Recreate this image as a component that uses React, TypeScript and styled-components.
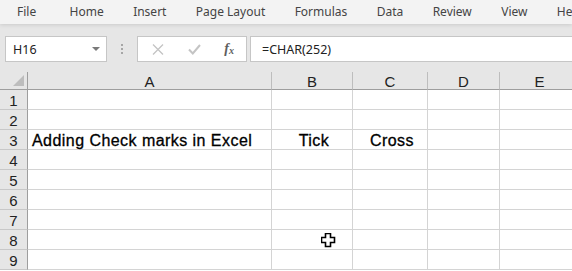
import React from 'react';
import styled, { createGlobalStyle } from 'styled-components';

const GlobalStyle = createGlobalStyle`
  html, body {
    margin: 0;
    padding: 0;
    background: #ffffff;
    overflow: hidden;
  }
`;

const TABS = ['File', 'Home', 'Insert', 'Page Layout', 'Formulas', 'Data', 'Review', 'View', 'Help'];

const COLUMNS = [
  { label: 'A', width: 244 },
  { label: 'B', width: 81 },
  { label: 'C', width: 75 },
  { label: 'D', width: 72 },
  { label: 'E', width: 80 },
];

// row 3 holds the only data
const CELLS: Record<string, { text: string; align: 'left' | 'center' }> = {
  '3A': { text: 'Adding Check marks in Excel', align: 'left' },
  '3B': { text: 'Tick', align: 'center' },
  '3C': { text: 'Cross', align: 'center' },
};

const ROWS = [1, 2, 3, 4, 5, 6, 7, 8, 9];

const App: React.FC = () => {
  return (
    <Window>
      <GlobalStyle />
      <Ribbon>
        {TABS.map((tab) => (
          <Tab key={tab}>{tab}</Tab>
        ))}
      </Ribbon>
      <FormulaBar>
        <NameBox>
          <span>H16</span>
          <DropArrow />
        </NameBox>
        <Grip>
          <i />
          <i />
          <i />
        </Grip>
        <FuncBox>
          <svg width="12" height="11" viewBox="0 0 12 11">
            <path d="M1 0.5 L11 10.5 M11 0.5 L1 10.5" stroke="#c4c4c4" strokeWidth="1.3" fill="none" />
          </svg>
          <svg width="13" height="11" viewBox="0 0 13 11">
            <path d="M1 5.5 L4.8 9.5 L12 1" stroke="#c4c4c4" strokeWidth="2" fill="none" />
          </svg>
          <Fx>
            f<sub>x</sub>
          </Fx>
        </FuncBox>
        <FormulaInput>=CHAR(252)</FormulaInput>
      </FormulaBar>
      <Sheet>
        <Grid>
          <Corner>
            <svg width="11" height="11" viewBox="0 0 11 11">
              <path d="M11 0 L11 11 L0 11 Z" fill="#bdbdbd" />
            </svg>
          </Corner>
          {COLUMNS.map((col) => (
            <ColHeader key={col.label}>{col.label}</ColHeader>
          ))}
          {ROWS.map((row) => (
            <React.Fragment key={row}>
              <RowHeader>{row}</RowHeader>
              {COLUMNS.map((col) => {
                const cell = CELLS[`${row}${col.label}`];
                return (
                  <Cell key={col.label} $align={cell ? cell.align : 'left'}>
                    {cell ? cell.text : ''}
                  </Cell>
                );
              })}
            </React.Fragment>
          ))}
        </Grid>
        <Pointer width="15" height="15" viewBox="0 0 15 15">
          <path
            d="M4.5 0.5 H9.5 V4.5 H13.5 V9.5 H9.5 V13.5 H4.5 V9.5 H0.5 V4.5 H4.5 Z"
            fill="#ffffff"
            stroke="#000000"
            strokeWidth="1.6"
          />
        </Pointer>
      </Sheet>
    </Window>
  );
};

export default App;

const Window = styled.div`
  width: 572px;
  height: 271px;
  overflow: hidden;
  background: #ffffff;
  font-family: 'Liberation Sans', Arial, sans-serif;
`;

const Ribbon = styled.div`
  height: 24px;
  display: flex;
  align-items: center;
  gap: 29.4px;
  padding-left: 17px;
  background: #f3f3f3;
  white-space: nowrap;
  position: relative;
  z-index: 1;
  box-shadow: 0 1px 4px rgba(0, 0, 0, 0.12);
`;

const Tab = styled.span`
  font-family: 'Noto Sans', 'Open Sans', sans-serif;
  font-size: 12px;
  color: #444444;
  line-height: 18px;

  &:first-child {
    margin-right: 4px;
  }
`;

const FormulaBar = styled.div`
  height: 48px;
  box-sizing: border-box;
  padding: 12px 0 0 5px;
  display: flex;
  align-items: flex-start;
  background: #e6e6e6;
`;

const Box = styled.div`
  height: 26px;
  box-sizing: border-box;
  background: #ffffff;
  border: 1px solid #c6c6c6;
  display: flex;
  align-items: center;
  font-family: 'Noto Sans', 'Open Sans', sans-serif;
  font-size: 12.5px;
  color: #222222;
`;

const NameBox = styled(Box)`
  width: 102px;
  padding: 0 6px 0 7px;
  justify-content: space-between;
`;

const DropArrow = styled.span`
  width: 0;
  height: 0;
  border-left: 4px solid transparent;
  border-right: 4px solid transparent;
  border-top: 4px solid #7a7a7a;
`;

const Grip = styled.div`
  width: 30px;
  height: 26px;
  display: flex;
  flex-direction: column;
  align-items: center;
  justify-content: center;
  gap: 2px;

  i {
    display: block;
    width: 2px;
    height: 2px;
    background: #a6a6a6;
  }
`;

const FuncBox = styled(Box)`
  width: 110px;
  padding: 0 12px 0 14px;
  justify-content: space-between;
`;

const Fx = styled.span`
  font-family: 'Liberation Serif', 'Times New Roman', serif;
  font-style: italic;
  font-weight: bold;
  font-size: 14px;
  color: #5e5e5e;
  line-height: 1;

  sub {
    font-size: 10px;
    vertical-align: -1px;
  }
`;

const FormulaInput = styled(Box)`
  flex: 1;
  margin-left: 3px;
  padding-left: 11px;
  border-right: none;
`;

const Sheet = styled.div`
  position: relative;
`;

const Grid = styled.div`
  display: grid;
  grid-template-columns: 28px 244px 81px 75px 72px 80px;
  grid-template-rows: 18px;
  grid-auto-rows: 20px;
`;

const HeaderBase = styled.div`
  box-sizing: border-box;
  background: #e6e6e6;
  display: flex;
  align-items: center;
  justify-content: center;
  font-size: 15px;
  color: #222222;
`;

const Corner = styled(HeaderBase)`
  border-right: 1px solid #9e9e9e;
  border-bottom: 1px solid #9e9e9e;
  justify-content: flex-end;
  align-items: flex-end;
  padding: 0 3px 3px 0;
`;

const ColHeader = styled(HeaderBase)`
  border-right: 1px solid #bdbdbd;
  border-bottom: 1px solid #9e9e9e;
  padding-top: 2px;
`;

const RowHeader = styled(HeaderBase)`
  border-right: 1px solid #9e9e9e;
  border-bottom: 1px solid #c8c8c8;
  padding-top: 1px;
`;

const Cell = styled.div<{ $align: 'left' | 'center' }>`
  box-sizing: border-box;
  border-right: 1px solid #d4d4d4;
  border-bottom: 1px solid #d4d4d4;
  display: flex;
  align-items: center;
  justify-content: ${(p) => (p.$align === 'center' ? 'center' : 'flex-start')};
  padding: 3px 0 0 4px;
  font-size: 16px;
  letter-spacing: 0.45px;
  -webkit-text-stroke: 0.3px #000000;
  color: #000000;
  white-space: nowrap;
`;

const Pointer = styled.svg`
  position: absolute;
  left: 321px;
  top: 161px;
`;
